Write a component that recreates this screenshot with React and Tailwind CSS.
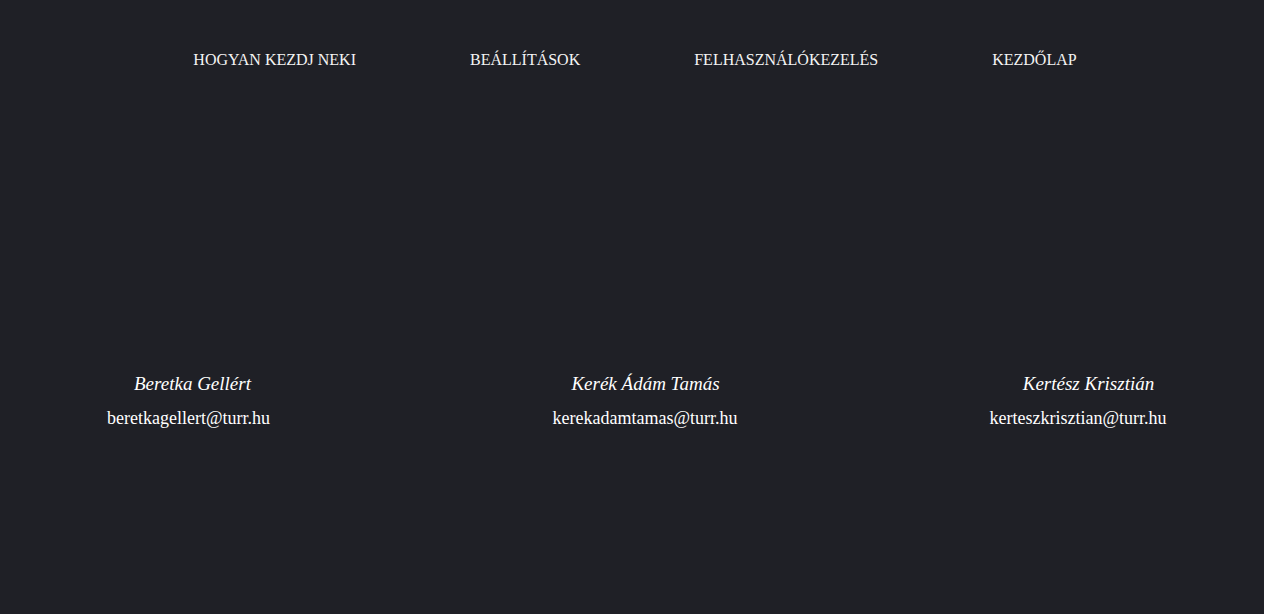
import React from "react";

const links = ["HOGYAN KEZDJ NEKI", "BEÁLLÍTÁSOK", "FELHASZNÁLÓKEZELÉS", "KEZDŐLAP"];

const people = [
  { name: "Beretka Gellért", email: "beretkagellert@turr.hu", col: "w-[377px]", nameCls: "pl-[8px]" },
  { name: "Kerék Ádám Tamás", email: "kerekadamtamas@turr.hu", col: "w-[380px] ml-[78px]", nameCls: "pl-[1px]" },
  { name: "Kertész Krisztián", email: "kerteszkrisztian@turr.hu", col: "w-[340px] ml-[73px]", nameCls: "pl-[21px]" },
];

const App = () => {
  return (
    <div className="min-h-[614px] w-full bg-[#1f2026] text-white font-['Liberation_Serif',serif] overflow-hidden">
      <nav className="flex justify-center gap-[114px] pt-[51px] pl-[6px] text-[16px] leading-[18px]">
        {links.map((l) => (
          <a key={l} className="text-[#f4f4f4]">
            {l}
          </a>
        ))}
      </nav>
      <div className="flex mt-[304px]">
        {people.map((p) => (
          <div key={p.email} className={`${p.col} flex flex-col items-center`}>
            <p className={`italic text-[19px] leading-[21px] ${p.nameCls}`}>{p.name}</p>
            <p className="text-[18px] leading-[21px] mt-[14px]">{p.email}</p>
          </div>
        ))}
      </div>
    </div>
  );
};

export default App;
